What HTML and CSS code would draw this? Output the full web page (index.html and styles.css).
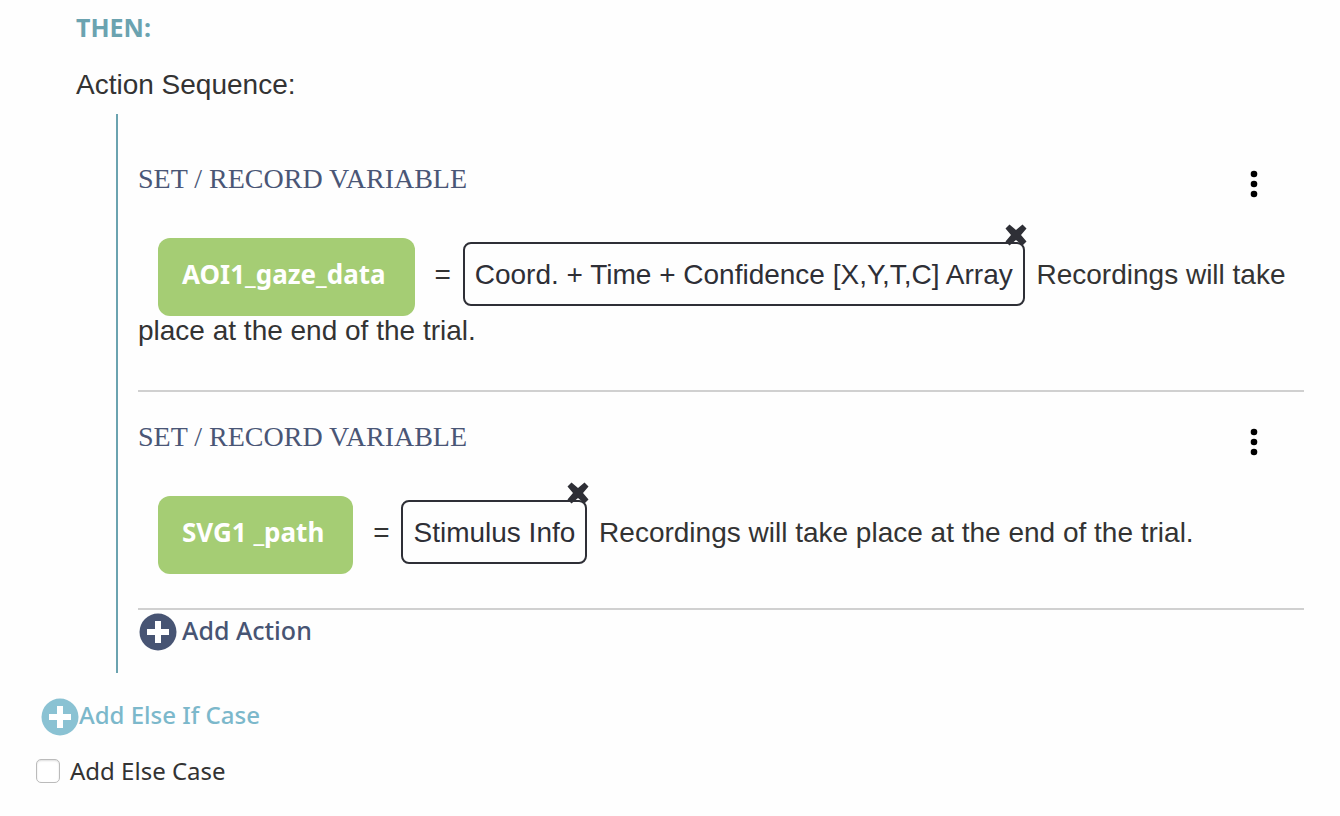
FILE: index.html
```html
<!DOCTYPE html>
<html lang="en">

<head>
    <meta charset="UTF-8">
    <meta name="viewport" content="width=device-width, initial-scale=1.0">
    <title>Trigger Actions</title>
    <link rel="stylesheet" href="styles.css">
</head>

<body>
    <main class="case">
        <section class="then">
            <h2 class="then-title">THEN:</h2>
            <p class="sequence-label">Action Sequence:</p>

            <div class="sequence">
                <article class="action">
                    <div class="action-head">
                        <h3 class="action-title">SET / RECORD VARIABLE</h3>
                        <button class="menu" type="button" aria-label="Action menu">
                            <svg width="8" height="28" viewBox="0 0 8 28">
                                <circle cx="4" cy="4" r="3.3" />
                                <circle cx="4" cy="14" r="3.3" />
                                <circle cx="4" cy="24" r="3.3" />
                            </svg>
                        </button>
                    </div>
                    <p class="action-text"><span class="variable">AOI1_gaze_data</span>= <span class="value">Coord. + Time + Confidence [X,Y,T,C] Array<button class="remove" type="button" aria-label="Remove value"><svg width="22" height="22" viewBox="0 0 22 22"><path d="M4.500 0.500 11 6 17.500 0.500 21.500 4.500 16 11 21.500 17.500 17.500 21.500 11 16 4.500 21.500 0.500 17.500 6 11 0.500 4.500Z" /></svg></button></span> Recordings will take place at the end of the trial.</p>
                </article>

                <article class="action">
                    <div class="action-head">
                        <h3 class="action-title">SET / RECORD VARIABLE</h3>
                        <button class="menu" type="button" aria-label="Action menu">
                            <svg width="8" height="28" viewBox="0 0 8 28">
                                <circle cx="4" cy="4" r="3.3" />
                                <circle cx="4" cy="14" r="3.3" />
                                <circle cx="4" cy="24" r="3.3" />
                            </svg>
                        </button>
                    </div>
                    <p class="action-text"><span class="variable">SVG1 _path</span>= <span class="value">Stimulus Info<button class="remove" type="button" aria-label="Remove value"><svg width="22" height="22" viewBox="0 0 22 22"><path d="M4.500 0.500 11 6 17.500 0.500 21.500 4.500 16 11 21.500 17.500 17.500 21.500 11 16 4.500 21.500 0.500 17.500 6 11 0.500 4.500Z" /></svg></button></span> Recordings will take place at the end of the trial.</p>
                </article>

                <button class="add add-action" type="button">
                    <svg width="38" height="38" viewBox="0 0 38 38">
                        <circle cx="19" cy="19" r="18.500" />
                        <path d="M16 8h6v8h8v6h-8v8h-6v-8H8v-6h8z" fill="#fff" />
                    </svg>
                    <span>Add Action</span>
                </button>
            </div>
        </section>

        <button class="add add-else-if" type="button">
            <svg width="38" height="38" viewBox="0 0 38 38">
                <circle cx="19" cy="19" r="18.500" />
                <path d="M16 8h6v8h8v6h-8v8h-6v-8H8v-6h8z" fill="#fff" />
            </svg>
            <span>Add Else If Case</span>
        </button>

        <label class="else-case" for="elseCase">
            <input class="else-check" id="elseCase" type="checkbox">
            Add Else Case
        </label>
    </main>
</body>

</html>
```

FILE: styles.css
```css
body {
    margin: 0;
    background-color: #fefefe;
    color: #333;
    font-family: "Liberation Sans", Arial, sans-serif;
    font-size: 28px;
}

h2,
h3,
p {
    margin: 0;
}

button {
    border: 0;
    padding: 0;
    background: none;
    cursor: pointer;
}

svg {
    display: block;
}

.case {
    padding: 8px 36px 24px;
}

.then {
    padding-left: 40px;
}

.then-title {
    color: #6ba3b0;
    font-family: "Noto Sans", sans-serif;
    font-size: 25px;
    line-height: 38px;
}

.sequence-label {
    margin-top: 18px;
    line-height: 42px;
}

.sequence {
    margin: 8px 0 0 40px;
    border-left: 2px solid #6ba3b0;
    padding: 12px 0 20px 20px;
}

.action {
    border-bottom: 2px solid #d0d0d0;
    padding: 32px 0 31px;
}

.action + .action {
    padding: 24px 0 47px;
}

.action-head {
    display: flex;
    justify-content: space-between;
    margin-bottom: 47px;
    padding-right: 46px;
}

.action-title {
    color: #4a5676;
    font-family: "Liberation Serif", "Times New Roman", serif;
    font-size: 28px;
    font-weight: normal;
    line-height: 42px;
}

.menu {
    padding-top: 10px;
}

.action-text {
    line-height: 56px;
}

.variable {
    margin: 0 20px;
    border-radius: 12px;
    padding: 18px 29px 24px 24px;
    background-color: #a5cd74;
    color: #fff;
    font-family: "Noto Sans", sans-serif;
    font-size: 26px;
    font-weight: bold;
    line-height: 40px;
}

.value {
    position: relative;
    margin: 0 4px;
    border: 2px solid #2e2f36;
    border-radius: 8px;
    padding: 15px 10px 14px;
    color: #2e2f36;
    white-space: nowrap;
}

.remove {
    position: absolute;
    top: -20px;
    right: -4px;
    fill: #2e2f36;
}

.add {
    display: flex;
    align-items: center;
    font-family: "Noto Sans", sans-serif;
    font-size: 25px;
    font-weight: 500;
    line-height: 38px;
}

.add span {
    padding-bottom: 4px;
}

.add-action {
    gap: 5px;
    margin: 1px 0 0 1px;
    color: #475473;
    fill: #475473;
}

.add-else-if {
    margin: 23px 0 0 5px;
    color: #7cb8cb;
    fill: #8ac2d3;
    font-size: 24px;
}

.else-case {
    display: flex;
    align-items: center;
    gap: 10px;
    margin-top: 14px;
    font-family: "Noto Sans", sans-serif;
    font-size: 24px;
    line-height: 38px;
}

.else-check {
    appearance: none;
    width: 24px;
    height: 24px;
    margin: 0;
    border: 1px solid #bbb;
    border-radius: 5px;
    background-color: #fff;
    box-shadow: inset 0 1px 2px #ddd;
}

.else-check:checked {
    background-color: #7cb8cb;
}
```
